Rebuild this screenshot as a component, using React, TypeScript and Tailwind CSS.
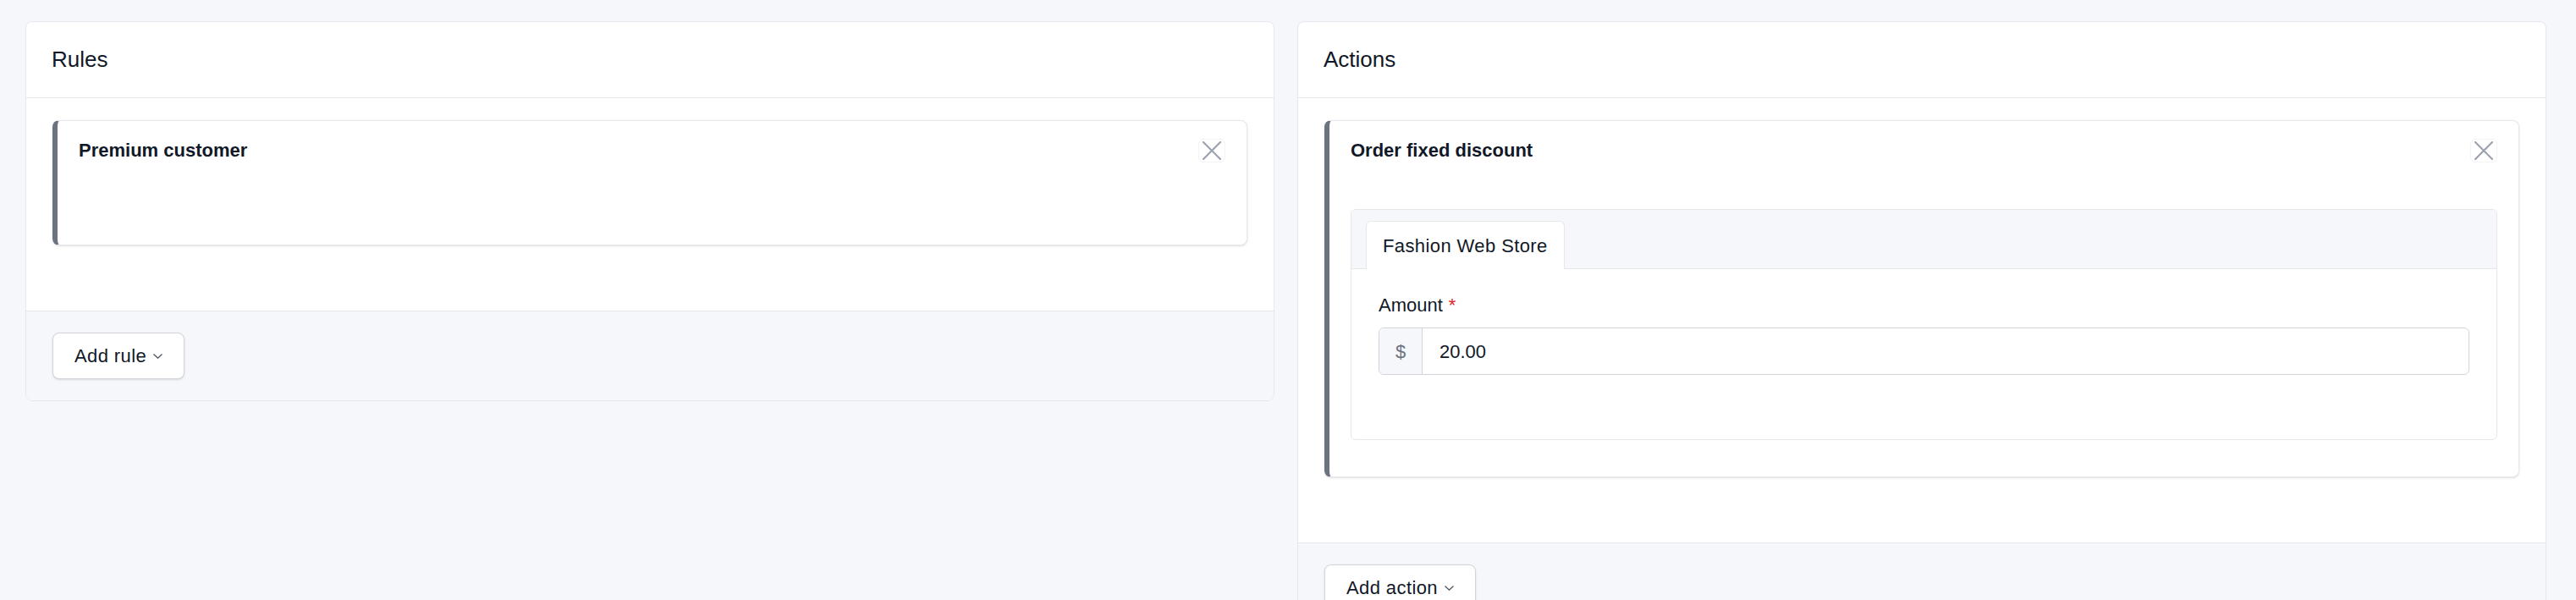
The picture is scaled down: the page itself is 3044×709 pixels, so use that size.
import { ReactNode } from 'react';

function CloseIcon() {
  return (
    <svg width="22" height="22" viewBox="0 0 22 22" fill="none">
      <path d="M1 1L21 21M21 1L1 21" stroke="#9ca3af" strokeWidth="2.2" strokeLinecap="square" />
    </svg>
  );
}

function Chevron() {
  return (
    <svg width="11" height="6" viewBox="0 0 11 6" fill="none">
      <path d="M0.5 0.5L5.5 5.2L10.5 0.5" stroke="#4b5563" strokeWidth="1.3" />
    </svg>
  );
}

function Panel({ title, footer, children }: { title: string; footer: string; children: ReactNode }) {
  return (
    <section className="bg-white border border-[#e5e7eb] rounded-[8px] overflow-hidden">
      <header className="h-[90px] px-[30px] flex items-center border-b border-[#e5e7eb]">
        <h2 className="text-[26px] font-medium text-[#111827]">{title}</h2>
      </header>
      <div className="px-[31px] pt-[26px] pb-[77px]">{children}</div>
      <footer className="border-t border-[#e5e7eb] bg-[#f6f7fa] px-[31px] py-[25px]">
        <button className="h-[55px] px-[25px] flex items-center gap-[8px] bg-white border border-[#d1d5db] rounded-[8px] shadow-sm text-[22px] font-medium text-[#111827] tracking-[0.4px]">
          {footer}
          <Chevron />
        </button>
      </footer>
    </section>
  );
}

function ItemCard({ title, children }: { title: string; children?: ReactNode }) {
  return (
    <div className="bg-white border border-[#e5e7eb] border-l-[6px] border-l-[#6b7280] rounded-[8px] shadow-sm px-[25px] pt-[18px] pb-[43px] min-h-[148px]">
      <div className="h-[33px] flex items-center justify-between">
        <span className="text-[22px] leading-[33px] font-bold text-[#111827]">{title}</span>
        <button className="w-[32px] h-[28px] flex items-center justify-center rounded-[6px] border border-[#f4f4f5]">
          <CloseIcon />
        </button>
      </div>
      {children}
    </div>
  );
}

export default function App() {
  return (
    <div
      className="h-screen overflow-hidden bg-[#f6f7fa] pt-[25px] pl-[30px] pr-[35px] grid grid-cols-2 gap-[27px] items-start"
      style={{ fontFamily: '"Liberation Sans", Arial, sans-serif' }}
    >
      <Panel title="Rules" footer="Add rule">
        <ItemCard title="Premium customer" />
      </Panel>

      <Panel title="Actions" footer="Add action">
        <ItemCard title="Order fixed discount">
          <div className="mt-[53px] border border-[#e5e7eb] rounded-[6px] overflow-hidden">
            <div className="h-[70px] bg-[#f6f7fa] border-b border-[#e5e7eb] px-[17px] flex items-end">
              <div className="-mb-px h-[57px] w-[235px] px-[19px] flex items-center bg-white border border-b-0 border-[#e5e7eb] rounded-t-[6px] text-[22px] text-[#111827] tracking-[0.4px]">
                Fashion Web Store
              </div>
            </div>
            <div className="px-[32px] pt-[26px] pb-[76px]">
              <label className="block text-[22px] leading-[33px] font-medium text-[#111827]">
                Amount<span className="ml-[7px] text-[#dc2626]">*</span>
              </label>
              <div className="mt-[10px] h-[56px] flex border border-[#d1d5db] rounded-[6px] overflow-hidden">
                <span className="w-[51px] flex items-center justify-center bg-[#f6f7fa] border-r border-[#d1d5db] text-[22px] text-[#6b7280]">
                  $
                </span>
                <span className="flex-1 flex items-center pl-[20px] text-[22px] text-[#111827]">20.00</span>
              </div>
            </div>
          </div>
        </ItemCard>
      </Panel>
    </div>
  );
}
